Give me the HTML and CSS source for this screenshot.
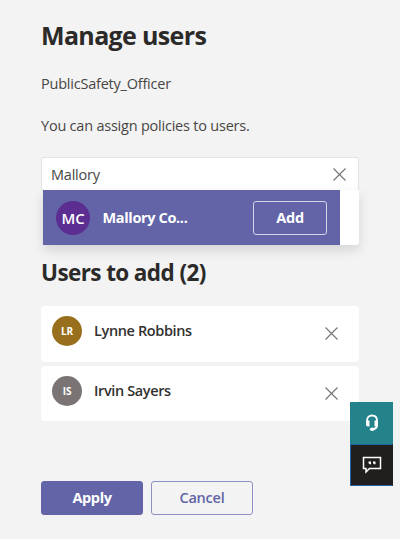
FILE: index.html
```html
<!DOCTYPE html>
<html lang="en">
<head>
<meta charset="utf-8">
<title>Manage users</title>
<link rel="stylesheet" href="styles.css">
</head>
<body>
<main class="panel">
  <h1 class="title">Manage users</h1>
  <p class="policy">PublicSafety_Officer</p>
  <p class="hint">You can assign policies to users.</p>
  <div class="search">
    <div class="search-box">
      <span class="search-text">Mallory</span>
      <svg class="close" viewBox="0 0 13 13"><path d="M.5.5l12 12M12.5.5l-12 12"/></svg>
    </div>
    <div class="dropdown">
      <div class="option">
        <span class="avatar large">MC</span>
        <span class="option-name">Mallory Co...</span>
        <button class="add">Add</button>
      </div>
    </div>
  </div>
  <h2 class="subtitle">Users to add (2)</h2>
  <ul class="users">
    <li class="user">
      <span class="avatar gold">LR</span>
      <span class="user-name">Lynne Robbins</span>
      <svg class="close" viewBox="0 0 13 13"><path d="M.5.5l12 12M12.5.5l-12 12"/></svg>
    </li>
    <li class="user">
      <span class="avatar gray">IS</span>
      <span class="user-name">Irvin Sayers</span>
      <svg class="close" viewBox="0 0 13 13"><path d="M.5.5l12 12M12.5.5l-12 12"/></svg>
    </li>
  </ul>
  <div class="actions">
    <button class="apply">Apply</button>
    <button class="cancel">Cancel</button>
  </div>
</main>
<aside class="support">
  <div class="help">
    <svg width="16" height="18" viewBox="0 0 16 18"><path d="M3 9V6.800C3 3.500 5 1.500 8 1.500s5 2 5 5.300v4.700q0 3-3.500 3.500" fill="none" stroke="#fff" stroke-width="1.800"/><path d="M2 7.500q0-1 1-1h2.500v6H4q-2 0-2-2zM14 7.500q0-1-1-1h-2.500v6H12q2 0 2-2z" fill="#fff"/><ellipse cx="8.300" cy="15.200" rx="2.400" ry="1.800" fill="#fff"/></svg>
  </div>
  <div class="feedback">
    <svg width="20" height="18" viewBox="0 0 20 18"><path d="M1.500 1.500h17v11H7.500L4 16v-3.500H1.500z" fill="none" stroke="#fff" stroke-width="1.500"/><path d="M6.500 5.500H9v2.800H7.500L6.500 7zM11 5.500h2.500v2.800H12L11 7z" fill="#fff"/></svg>
  </div>
</aside>
</body>
</html>
```
FILE: styles.css
```css
* { box-sizing: border-box; }
body {
  margin: 0;
  height: 539px;
  overflow: hidden;
  background: #f3f3f3;
  color: #484644;
  font-family: "Open Sans", "Noto Sans", sans-serif;
  font-size: 14.5px;
  letter-spacing: -0.22px;
}
h1, h2, p, ul { margin: 0; padding: 0; }
button { padding: 0; font-family: inherit; letter-spacing: inherit; }
.panel { width: 318px; margin-left: 41px; padding-top: 17px; }
.title, .subtitle { color: #2b2a29; font-weight: 700; white-space: nowrap; }
.title { font-size: 25px; line-height: 36px; letter-spacing: -0.65px; }
.policy { margin-top: 21px; line-height: 20px; }
.hint { margin-top: 22px; line-height: 20px; }
.search { position: relative; margin-top: 21px; height: 88px; }
.search-box {
  display: flex;
  align-items: center;
  justify-content: space-between;
  height: 34px;
  padding: 0 12px 0 9px;
  background: #fff;
  border: 1px solid #e3e3e3;
  border-radius: 3px;
}
.close { display: block; width: 13px; height: 13px; fill: none; stroke: #737373; stroke-width: 1.1; }
.dropdown {
  height: 55px;
  margin: -1px 0 0 2px;
  background: #fff;
  border-radius: 0 0 3px 3px;
  box-shadow: 0 5px 12px rgba(0, 0, 0, .13);
}
.option {
  display: flex;
  align-items: center;
  width: 297px;
  height: 55px;
  padding: 0 13px 0 13px;
  background: #6264a7;
  color: #fff;
}
.avatar {
  display: flex;
  flex: none;
  align-items: center;
  justify-content: center;
  width: 30px;
  height: 30px;
  border-radius: 50%;
  color: #fff;
  font-size: 10px;
  font-weight: 700;
}
.large { width: 34px; height: 34px; background: #5c2e91; font-size: 15px; font-weight: 600; }
.gold { background: #986f1d; }
.gray { background: #7a7574; }
.option-name { margin-left: 12.5px; font-weight: 700; letter-spacing: -0.35px; white-space: nowrap; }
.add {
  width: 74px;
  height: 34px;
  margin-left: auto;
  border: 1px solid #d5d5ea;
  border-radius: 3px;
  background: transparent;
  color: #fff;
  font-size: 14.5px;
  font-weight: 700;
}
.subtitle { margin-top: 12px; font-size: 22.5px; line-height: 32px; letter-spacing: -0.6px; }
.users { display: grid; gap: 4px; margin-top: 17px; list-style: none; }
.user {
  display: flex;
  height: 55.5px;
  padding: 10px 21px 0 11px;
  border-radius: 4px;
  background: #fff;
  color: #323130;
}
.user-name { margin-left: 12px; line-height: 29px; font-weight: 600; letter-spacing: -0.38px; white-space: nowrap; }
.user .close { margin: 11px 0 0 auto; }
.actions { display: flex; gap: 8px; margin-top: 60px; }
.apply, .cancel {
  width: 102px;
  height: 34px;
  padding-bottom: 2px;
  border: 1px solid #6264a7;
  border-radius: 3px;
  font-size: 14.5px;
  font-weight: 600;
}
.apply { background: #6264a7; color: #fff; font-weight: 700; letter-spacing: -0.4px; }
.cancel { border-color: #8e90c4; background: transparent; color: #6264a7; }
.support { position: absolute; top: 402px; right: 7px; width: 43px; }
.help, .feedback { display: flex; align-items: center; justify-content: center; height: 42px; }
.help { background: #23828a; }
.feedback { border: 1px solid #2463a5; border-right-color: #201f1e; background: #201f1e; }
```
